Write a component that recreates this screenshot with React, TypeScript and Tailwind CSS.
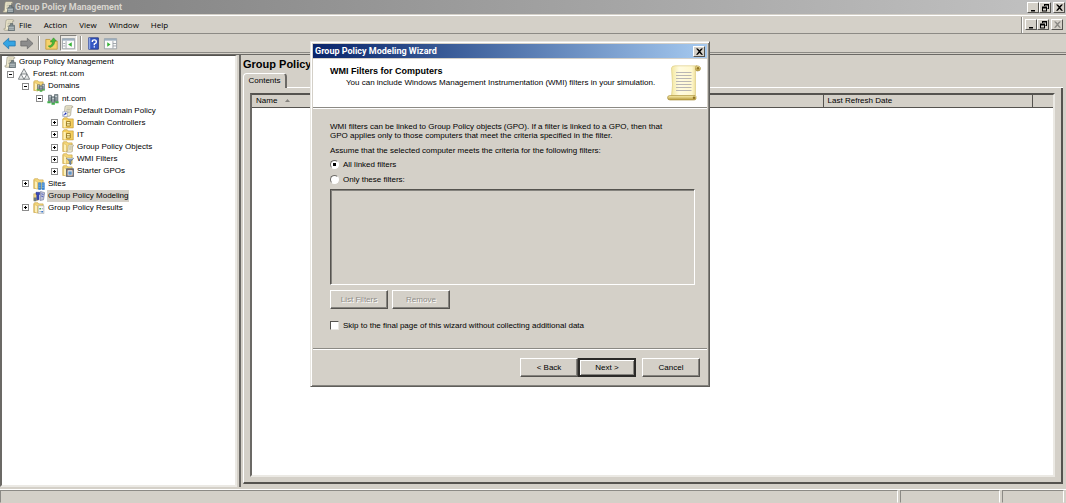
import type { ReactNode } from "react";

const raised =
  "border border-t-white border-l-white border-r-[#55534f] border-b-[#55534f] bg-[#d4d0c8]";

function Scroll() {
  return (
    <g>
      <path d="M4 2.5 Q4 1 5.5 1 H13 Q14.5 1 14.5 3 H12.5 L11.5 13 Q11 15 9.5 15 H2.5 Q1 15 1.2 13 H3z" fill="#efe9cc" stroke="#8d8a78" strokeWidth=".8" />
      <path d="M6 4h5M6 6h5M5.5 8h5M5.3 10h5" stroke="#a5a59a" strokeWidth=".8" />
    </g>
  );
}

function FolderShape() {
  return (
    <g>
      <path d="M1 2.5 L2 1 H6.5 L7.5 2.5 H13.5 V14 H1z" fill="#f5d77a" stroke="#c39a37" strokeWidth=".8" />
      <path d="M2 3.5 L6 5 V15 L2 13.5z" fill="#fdf0b8" stroke="#cda648" strokeWidth=".6" />
    </g>
  );
}

function Towers() {
  return (
    <g>
      <path d="M2 3h4v8H2zM10 2h4.500v9H10zM6 5h4.500v8H6z" fill="#8e9aa0" stroke="#4d5b60" strokeWidth=".8" />
      <path d="M3 5h2M7 7.500h2.500M11 4.500h2.500" stroke="#eef3f4" />
      <path d="M.5 11h4.500v2.500H.5zM6 13h4.500v2.500H6zM11 11h4.500v2.500H11z" fill="#3fae4a" />
    </g>
  );
}

type IconName =
  | "console" | "forest" | "domains" | "domain" | "link" | "ou" | "objects"
  | "wmi" | "starter" | "sites" | "modeling" | "results";

const drawings: Record<IconName, ReactNode> = {
  console: (
    <>
      <Scroll />
      <path d="M8 8.500 h2 V6 h3 v2.500 h2.500 V15.500 H7z" fill="#78858a" stroke="#48545a" strokeWidth=".7" />
      <path d="M8 11h6.500M8 13.500h6.500" stroke="#d9dfe0" />
    </>
  ),
  forest: (
    <path d="M8 1 L12 8 H4zM4 8 L8 15 H.5zM12 8 L15.500 15 H8z" fill="#e6e8e8" stroke="#5f6669" strokeLinejoin="round" />
  ),
  domains: (
    <>
      <FolderShape />
      <g transform="translate(4.500 4) scale(.75)"><Towers /></g>
    </>
  ),
  domain: <Towers />,
  link: (
    <>
      <Scroll />
      <path d="M1 9h6v6.500H1z" fill="#fff" stroke="#7c8cae" strokeWidth=".7" />
      <path d="M2.500 14 Q2.500 11.500 5 11.500" stroke="#1e32b4" strokeWidth="1.300" fill="none" />
      <path d="M4 9.700 L6.500 11.500 L4 13z" fill="#1e32b4" />
    </>
  ),
  ou: (
    <>
      <path d="M1 2.500 L3 1 H7 L8 2.500 H15 V14.500 H1z" fill="#f4cf5f" stroke="#c0922c" strokeWidth=".8" />
      <path d="M2 4h3v10H2z" fill="#fdf0b8" />
      <path d="M6 6h5v6H6zM6 9h5" fill="#fff3b0" stroke="#8b6a14" />
    </>
  ),
  objects: (
    <>
      <FolderShape />
      <g transform="translate(5.500 4.500) scale(.7)"><Scroll /></g>
    </>
  ),
  wmi: (
    <>
      <FolderShape />
      <path d="M6 7 H15.500 L12 11 V15.500 L9.800 14.500 V11z" fill="#7690ac" stroke="#4b6178" strokeWidth=".7" />
      <path d="M7 7.500h7.500" stroke="#e4eef8" />
    </>
  ),
  starter: (
    <>
      <FolderShape />
      <path d="M6 5h9.500v10.500H6z" fill="#8a6a5a" stroke="#4b6178" />
      <path d="M7.500 7h6.500v7H7.500z" fill="#eef5fb" />
      <path d="M8.500 8.500h4.500v4.500H8.500z" fill="#5f93c4" />
    </>
  ),
  sites: (
    <>
      <FolderShape />
      <path d="M7 6h3.500v9.500H7zM11.500 6h4v9.500h-4z" fill="#1f72c8" />
      <path d="M7.500 8h2.500M7.500 10.500h2.500M7.500 13h2.500M12 8h3M12 10.500h3M12 13h3" stroke="#d2ecff" strokeWidth=".8" />
    </>
  ),
  modeling: (
    <>
      <path d="M1 5h4l1 1v8H1z" fill="#f3d98a" stroke="#b79a4c" strokeWidth=".7" />
      <path d="M1 10h3.500v5H1z" fill="#6d7a80" />
      <path d="M4 3h5v3H8v7H5V6H4z" fill="#3949b8" stroke="#20297a" strokeWidth=".6" />
      <path d="M10 2 L15.500 3.500 L14 13 L9.500 14z" fill="#bfc2d8" stroke="#6a6f92" strokeWidth=".8" />
      <path d="M11 5l3 1M10.800 8l3 1" stroke="#3949b8" />
    </>
  ),
  results: (
    <>
      <FolderShape />
      <path d="M7 5h7.500v10.500H7z" fill="#fbfbfb" stroke="#9ea3a7" strokeWidth=".8" />
      <path d="M8.500 8h2v2h-2z" fill="#3fae4a" />
      <path d="M11.500 9h2M8.500 13h2" stroke="#7b8690" />
      <path d="M11 12h2.500v2H11z" fill="#3a78c8" />
    </>
  ),
};

function Icon({ name }: { name: IconName }) {
  return (
    <svg viewBox="0 0 16 16" className="h-3 w-3 shrink-0" fill="none" aria-hidden="true">
      {drawings[name]}
    </svg>
  );
}

type Row = { label: string; icon: IconName; level: number; state?: "open" | "closed"; selected?: boolean };

const rows: Row[] = [
  { label: "Group Policy Management", icon: "console", level: 0 },
  { label: "Forest: nt.com", icon: "forest", level: 1, state: "open" },
  { label: "Domains", icon: "domains", level: 2, state: "open" },
  { label: "nt.com", icon: "domain", level: 3, state: "open" },
  { label: "Default Domain Policy", icon: "link", level: 4 },
  { label: "Domain Controllers", icon: "ou", level: 4, state: "closed" },
  { label: "IT", icon: "ou", level: 4, state: "closed" },
  { label: "Group Policy Objects", icon: "objects", level: 4, state: "closed" },
  { label: "WMI Filters", icon: "wmi", level: 4, state: "closed" },
  { label: "Starter GPOs", icon: "starter", level: 4, state: "closed" },
  { label: "Sites", icon: "sites", level: 2, state: "closed" },
  { label: "Group Policy Modeling", icon: "modeling", level: 2, selected: true },
  { label: "Group Policy Results", icon: "results", level: 2, state: "closed" },
];

const indents = ["pl-0.5", "pl-px", "pl-4", "pl-[30px]", "pl-[45px]"];

function Tree() {
  return (
    <ul className="grid h-[158px] auto-rows-fr">
      {rows.map((row) => (
        <li key={row.label} className={"flex items-center " + indents[row.level]}>
          {row.level > 0 && (
            <span className="flex w-[15px] shrink-0 justify-center">
              {row.state && (
                <button
                  type="button"
                  aria-label={row.label}
                  aria-expanded={row.state === "open"}
                  className="h-[7px] w-[7px] border border-[#8c8c8c] bg-white"
                >
                  <svg viewBox="0 0 5 5" className="block h-[5px] w-[5px]" shapeRendering="crispEdges" aria-hidden="true">
                    <path d={row.state === "open" ? "M1 2h3v1H1z" : "M1 2h3v1H1zM2 1h1v3H2z"} fill="#000" />
                  </svg>
                </button>
              )}
            </span>
          )}
          <Icon name={row.icon} />
          <span className={"ml-0.5 px-px leading-3 whitespace-nowrap " + (row.selected ? "bg-[#d4d0c8]" : "")}>
            {row.label}
          </span>
        </li>
      ))}
    </ul>
  );
}

const glyphs = {
  minimize: "M2 7h4v1.500H2z",
  restore: "M3 1h5v5H6.500V5H7V2.500H4V3H3zM1 3.500h5v5H1zM2 5.500v2h3v-2z",
  close: "M1 1.500h1.800L4.500 3.300 6.200 1.500H8L5.400 4.500 8 7.800H6.200L4.500 5.800 2.800 7.800H1L3.600 4.500z",
};

function CaptionButton({ kind, disabled }: { kind: keyof typeof glyphs; disabled?: boolean }) {
  return (
    <button type="button" aria-label={kind} disabled={disabled} className={"flex h-[11px] w-3 items-center justify-center " + raised}>
      <svg viewBox="0 0 9 9" className="h-[9px] w-[9px]" aria-hidden="true">
        <path d={glyphs[kind]} fillRule="evenodd" fill={disabled ? "#8b8984" : "#000"} />
      </svg>
    </button>
  );
}

function CaptionButtons({ disabledClose }: { disabledClose?: boolean }) {
  return (
    <div className="flex">
      <CaptionButton kind="minimize" />
      <CaptionButton kind="restore" />
      <span className="w-0.5" />
      <CaptionButton kind="close" disabled={disabledClose} />
    </div>
  );
}

function ToolButton({ label, pressed, children }: { label: string; pressed?: boolean; children: ReactNode }) {
  return (
    <button
      type="button"
      aria-label={label}
      className={"flex h-4 w-[17px] items-center justify-center border " + (pressed ? "border-t-[#85837e] border-l-[#85837e] border-r-white border-b-white bg-[#ebe9e4]" : "border-transparent")}
    >
      <svg viewBox="0 0 16 16" className="h-[13px] w-[13px] shrink-0 overflow-visible" fill="none" aria-hidden="true">{children}</svg>
    </button>
  );
}

function Divider() {
  return <span className="mx-[3px] h-[14px] w-0.5 border-l border-l-[#908e88] bg-white" />;
}

function PaneGlyph({ flip }: { flip?: boolean }) {
  return (
    <>
      <path d="M.5 2h15v12.500H.5z" fill="#fbfbfb" stroke="#8f969c" />
      <path d="M.5 2h15v2.500H.5z" fill="#9daebd" />
      <path d={flip ? "M11 5v9M11 8h4M11 11h4" : "M5 5v9M1.500 8H4M1.500 11H4"} stroke="#8f969c" />
      <path d={flip ? "M4 6.500v5.500L8 9.200z" : "M12 6.500v5.500L7.500 9.200z"} fill="#35b234" />
    </>
  );
}

function Toolbar() {
  return (
    <div className="flex h-[19px] items-center border-b border-b-[#8c8a85] pl-px">
      <ToolButton label="Back">
        <path d="M0 8 L7 1.500 V5 H15 V11 H7 V14.500z" fill="#35a5e4" stroke="#2577b0" />
      </ToolButton>
      <ToolButton label="Forward">
        <path d="M16 8 L9 1.500 V5 H1 V11 H9 V14.500z" fill="#8c8c8c" stroke="#6d6d6d" />
      </ToolButton>
      <Divider />
      <ToolButton label="Up one level">
        <path d="M1 3h5l1.500 2H15v10H1z" fill="#f5d26b" stroke="#bf9638" />
        <path d="M4 11 Q9 11 9 6 H6.500 L10.500 1 L14 5 H12 Q12 11 6 13z" fill="#48b839" stroke="#2c8422" strokeWidth=".6" />
      </ToolButton>
      <ToolButton label="Show or hide console tree" pressed><PaneGlyph /></ToolButton>
      <Divider />
      <ToolButton label="Help">
        <path d="M2 1h12v14H2z" fill="#3558c4" stroke="#1d2f7c" />
        <path d="M2 1h2v14H2z" fill="#8ca6e6" />
        <path d="M6.500 6 Q6.500 3.500 9 3.500 T11.500 6 Q11.500 7.500 9 8.500 V10M9 11.500v1.500" stroke="#fff" strokeWidth="1.700" />
      </ToolButton>
      <ToolButton label="Show or hide action pane"><PaneGlyph flip /></ToolButton>
    </div>
  );
}

function PushButton({ children, disabled, primary }: { children: ReactNode; disabled?: boolean; primary?: boolean }) {
  const frame = primary
    ? "border-2 border-[#2b2a28] bg-[#d4d0c8] shadow-[inset_1px_1px_0_#fff,inset_-1px_-1px_0_#85837e]"
    : raised + " shadow-[inset_-1px_-1px_0_#85837e]";
  return (
    <button
      type="button"
      disabled={disabled}
      className={"flex h-[19px] w-[58px] items-center justify-center whitespace-pre " + frame + (disabled ? " text-[#8f8d88] [text-shadow:1px_1px_0_#fff]" : "")}
    >
      {children}
    </button>
  );
}

function RadioRow({ label, checked }: { label: string; checked?: boolean }) {
  return (
    <label className="flex h-[15px] items-center gap-1">
      <input
        type="radio"
        name="filters"
        defaultChecked={checked}
        className="m-0 h-[9px] w-[9px] appearance-none rounded-full border border-t-[#6d6b67] border-l-[#6d6b67] border-r-white border-b-white bg-white checked:bg-[radial-gradient(circle,#000_0_1.5px,#fff_2px)]"
      />
      {label}
    </label>
  );
}

function BigScroll() {
  return (
    <svg viewBox="0 0 34 36" className="h-9 w-[34px] shrink-0" aria-hidden="true">
      <defs>
        <linearGradient id="paper" x1="0" y1="0" x2="1" y2="0">
          <stop offset="0" stopColor="#f3e7a0" />
          <stop offset=".3" stopColor="#fffbe0" />
          <stop offset=".8" stopColor="#fff8cf" />
          <stop offset="1" stopColor="#e8d585" />
        </linearGradient>
        <linearGradient id="roll" x1="0" y1="0" x2="0" y2="1">
          <stop offset="0" stopColor="#fbf0ae" />
          <stop offset="1" stopColor="#b79a3c" />
        </linearGradient>
      </defs>
      <path d="M4.500 3 Q5 .8 8 .8 H30 L28.500 5 V31 H4.500 L5.500 20z" fill="url(#paper)" stroke="#d9c676" strokeWidth=".6" />
      <path d="M29 1 Q33.500 .5 33.500 3.500 Q33.500 6 30.500 6 Q28.500 6 28.500 4z" fill="url(#roll)" stroke="#a58a34" strokeWidth=".6" />
      <circle cx="31" cy="3.300" r="1.200" fill="#907322" />
      <path d="M3 30.500 H28 Q29.500 31 29 34 Q28.500 35 27 35 H3 Q.5 35 .5 32.700 T3 30.500z" fill="url(#roll)" stroke="#a58a34" strokeWidth=".6" />
      <circle cx="27" cy="32.700" r="1.200" fill="#907322" />
      <path d="M9 7.500h15.500M9 10.500h15.500M9 13.500h15.500M9 16.500h15.500M9 19.500h15.500M9 22.500h15.500M9 25.500h15.500" stroke="#b9b6b4" strokeWidth="1.100" />
    </svg>
  );
}

function Wizard() {
  return (
    <section
      role="dialog"
      aria-labelledby="wizard-title"
      className="absolute top-[41px] left-[310px] w-[400px] border border-t-[#e9e7e2] border-l-[#e9e7e2] border-r-[#5f5e5a] border-b-[#5f5e5a] bg-[#d4d0c8] p-px leading-[9px] shadow-[inset_1px_1px_0_#fff,inset_-1px_-1px_0_#85837e]"
    >
      <header className="m-px flex h-[14px] items-center justify-between bg-linear-to-r from-[#0a246a] to-[#a6caf0] pr-0.5 pl-0.5 text-white">
        <h2 id="wizard-title" className="font-['Roboto',sans-serif] text-[9px] font-bold">Group Policy Modeling Wizard</h2>
        <CaptionButton kind="close" />
      </header>
      <div className="mx-px flex h-[49px] items-start justify-between border-b border-b-[#8c8a85] bg-white pt-[6px] pr-[6px] pl-[17px]">
        <div>
          <h3 className="text-[9px] leading-3 font-bold">WMI Filters for Computers</h3>
          <p className="pl-4 leading-3">You can include Windows Management Instrumentation (WMI) filters in your simulation.</p>
        </div>
        <BigScroll />
      </div>
      <form className="mx-px border-t border-t-white pt-[13px] pr-3 pl-[17px]">
        <p className="w-[345px]">
          WMI filters can be linked to Group Policy objects (GPO). If a filter is linked to a GPO, then that GPO applies only to those computers that meet the criteria specified in the filter.
        </p>
        <p className="mt-[6px] mb-0.5">Assume that the selected computer meets the criteria for the following filters:</p>
        <RadioRow label="All linked filters" checked />
        <RadioRow label="Only these filters:" />
        <div className="mt-0.5 h-24 border border-t-[#55534f] border-l-[#55534f] border-r-white border-b-white shadow-[inset_1px_1px_0_#85837e]" />
        <div className="mt-[5px] flex gap-1">
          <PushButton disabled>List Filters</PushButton>
          <PushButton disabled>Remove</PushButton>
        </div>
        <label className="mt-[10px] mb-[17px] flex h-3 items-center gap-1">
          <input
            type="checkbox"
            className="m-0 h-[9px] w-[9px] appearance-none border border-t-[#55534f] border-l-[#55534f] border-r-[#e9e7e2] border-b-[#e9e7e2] bg-white"
          />
          Skip to the final page of this wizard without collecting additional data
        </label>
      </form>
      <footer className="mx-px flex justify-end border-t border-t-[#8c8a85] pr-[7px] pb-2 shadow-[inset_0_1px_0_#fff]">
        <div className="mt-[9px] flex">
          <PushButton>{"< Back"}</PushButton>
          <PushButton primary>{"Next >"}</PushButton>
          <span className="w-[6px]" />
          <PushButton>Cancel</PushButton>
        </div>
      </footer>
    </section>
  );
}

export default function App() {
  return (
    <div className="relative flex h-screen flex-col overflow-hidden bg-[#d4d0c8] font-['Liberation_Sans',sans-serif] text-[8px] leading-3 text-black">
      <header className="flex h-[14px] items-center justify-between bg-linear-to-r from-[#7f7f7f] to-[#c2c2c2] pr-px pl-0.5">
        <div className="flex items-center gap-px">
          <Icon name="console" />
          <h1 className="font-['Roboto',sans-serif] text-[9px] font-bold text-[#d8d5ce]">Group Policy Management</h1>
        </div>
        <CaptionButtons />
      </header>
      <div className="mt-px flex h-[19px] items-center border-t border-b border-t-white border-b-[#8c8a85] pr-[3px] pl-[3px]">
        <Icon name="console" />
        <nav className="ml-1 flex flex-1 gap-3 font-['Open_Sans',sans-serif]">
          {["File", "Action", "View", "Window", "Help"].map((item) => (
            <button key={item} type="button">{item}</button>
          ))}
        </nav>
        <span className="mr-0.5 h-4 w-0.5 border-l border-l-[#8c8a85] bg-white" />
        <CaptionButtons disabledClose />
      </div>
      <Toolbar />
      <main className="mt-px flex min-h-0 flex-1 border-t border-t-[#6b6965]">
        <aside className="w-[237px] shrink-0 border-t border-r-2 border-b-2 border-l-2 border-t-[#55534f] border-r-[#ebe9e4] border-b-[#ebe9e4] border-l-[#6b6965] bg-white">
          <Tree />
        </aside>
        <section className="ml-0.5 flex min-w-0 flex-1 flex-col border-l-2 border-l-[#6b6965] pr-[3px] pb-[3px] pl-0.5">
          <h2 className="flex h-[18px] items-center text-[11px] font-bold">Group Policy</h2>
          <div className="flex h-[15px]">
            <button type="button" className="w-[44px] rounded-t-sm border-t border-r-2 border-l border-t-white border-r-[#6b6965] border-l-white">
              Contents
            </button>
            <span className="flex-1 border-b border-b-white" />
          </div>
          <div className="flex min-h-0 flex-1 border-r-2 border-b-2 border-l border-r-[#55534f] border-b-[#55534f] border-l-white px-[6px] pt-[5px] pb-[5px]">
            <div className="flex-1 border-t-2 border-r-2 border-b-2 border-l-2 border-t-[#55534f] border-r-[#ebe9e4] border-b-[#ebe9e4] border-l-[#6b6965] bg-white">
              <table className="w-full table-fixed border-collapse text-left">
                <colgroup>
                  <col className="w-[71.3%]" />
                  <col className="w-[26.2%]" />
                  <col />
                </colgroup>
                <thead>
                  <tr className="h-3 border-b border-b-[#55534f] bg-[#d4d0c8]">
                    <th className="border-r border-r-[#55534f] p-0 pl-1 font-normal">
                      Name
                      <svg viewBox="0 0 7 4" className="ml-2 inline h-[3px] w-[5px] align-middle" aria-hidden="true">
                        <path d="M0 4 L3.500 0 L7 4z" fill="#85837e" />
                      </svg>
                    </th>
                    <th className="border-r border-r-[#55534f] p-0 pl-1 font-normal">Last Refresh Date</th>
                    <th className="p-0" />
                  </tr>
                </thead>
              </table>
            </div>
          </div>
        </section>
      </main>
      <footer className="mt-0.5 flex h-[14px] gap-0.5 border-t border-t-white pr-0.5">
        <span className="flex-1 border border-t-[#8c8a85] border-r-white border-b-transparent border-l-[#8c8a85]" />
        <span className="w-[100px] border border-t-[#8c8a85] border-r-white border-b-transparent border-l-[#8c8a85]" />
        <span className="w-[62px] border border-t-[#8c8a85] border-r-white border-b-transparent border-l-[#8c8a85]" />
      </footer>
      <Wizard />
    </div>
  );
}
